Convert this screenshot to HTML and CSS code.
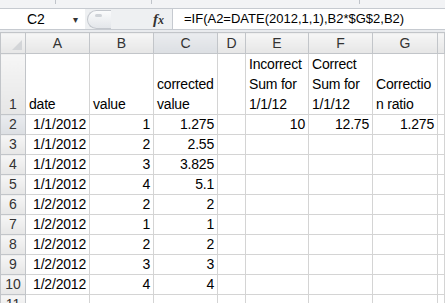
FILE: index.html
```html
<!DOCTYPE html>
<html lang="en">
<head>
    <meta charset="UTF-8">
    <title>Sheet</title>
    <link rel="stylesheet" href="styles.css">
</head>
<body>
    <div class="ribbon">
        <div class="rib rib-1"></div>
        <div class="rib rib-2"></div>
        <div class="rib rib-3"></div>
    </div>

    <div class="formula-bar">
        <div class="name-box">
            <span class="cell-ref">C2</span>
            <span class="drop">&#9662;</span>
        </div>
        <div class="splitter"><div class="knob"><span class="dimple"></span></div></div>
        <div class="fx"><i>f</i><i class="x">x</i></div>
        <div class="formula">=IF(A2=DATE(2012,1,1),B2*$G$2,B2)</div>
    </div>

    <table class="sheet">
        <colgroup>
            <col class="c-hdr"><col class="c-a"><col class="c-b"><col class="c-c"><col class="c-d"><col class="c-e"><col class="c-f"><col class="c-g"><col class="c-h">
        </colgroup>
        <tr class="col-heads">
            <th class="corner"><span class="tri"></span></th>
            <th>A</th><th>B</th><th class="sel">C</th><th>D</th><th>E</th><th>F</th><th>G</th><th></th>
        </tr>
        <tr class="tall">
            <th>1</th>
            <td>date</td><td>value</td><td>corrected<br>value</td><td></td>
            <td>Incorrect<br>Sum for<br>1/1/12</td>
            <td>Correct<br>Sum for<br>1/1/12</td>
            <td>Correctio<br>n ratio</td><td></td>
        </tr>
        <tr><th class="sel">2</th><td class="n">1/1/2012</td><td class="n">1</td><td class="n">1.275</td><td></td><td class="n">10</td><td class="n">12.75</td><td class="n">1.275</td><td></td></tr>
        <tr><th>3</th><td class="n">1/1/2012</td><td class="n">2</td><td class="n">2.55</td><td></td><td></td><td></td><td></td><td></td></tr>
        <tr><th>4</th><td class="n">1/1/2012</td><td class="n">3</td><td class="n">3.825</td><td></td><td></td><td></td><td></td><td></td></tr>
        <tr><th>5</th><td class="n">1/1/2012</td><td class="n">4</td><td class="n">5.1</td><td></td><td></td><td></td><td></td><td></td></tr>
        <tr><th>6</th><td class="n">1/2/2012</td><td class="n">2</td><td class="n">2</td><td></td><td></td><td></td><td></td><td></td></tr>
        <tr><th>7</th><td class="n">1/2/2012</td><td class="n">1</td><td class="n">1</td><td></td><td></td><td></td><td></td><td></td></tr>
        <tr><th>8</th><td class="n">1/2/2012</td><td class="n">2</td><td class="n">2</td><td></td><td></td><td></td><td></td><td></td></tr>
        <tr><th>9</th><td class="n">1/2/2012</td><td class="n">3</td><td class="n">3</td><td></td><td></td><td></td><td></td><td></td></tr>
        <tr><th>10</th><td class="n">1/2/2012</td><td class="n">4</td><td class="n">4</td><td></td><td></td><td></td><td></td><td></td></tr>
        <tr><th>11</th><td></td><td></td><td></td><td></td><td></td><td></td><td></td><td></td></tr>
    </table>
</body>
</html>
```

FILE: styles.css
```css
body {
    margin: 0;
    font-family: "Liberation Sans", Arial, sans-serif;
    font-size: 14px;
    color: #000;
    background-color: #e9ebee;
    overflow: hidden;
}

/* strip left over from the ribbon */
.ribbon {
    height: 8px;
    background-color: #f2f3f5;
    border-bottom: 1px solid #c6cad0;
    display: flex;
}

.rib {
    height: 4px;
    border-right: 1px solid #c0c4ca;
}

.rib-1 { width: 55px; }
.rib-2 { width: 95px; }
.rib-3 { width: 207px; }

/* name box + formula */
.formula-bar {
    display: flex;
    height: 20px;
    background-color: #eef0f2;
    border-bottom: 1px solid #c6cad0;
}

.name-box {
    width: 85px;
    background-color: #fff;
    display: flex;
    align-items: center;
    box-sizing: border-box;
}

.cell-ref {
    width: 56px;
    padding-left: 27px;
    box-sizing: border-box;
    font-size: 14px;
}

.drop {
    font-size: 10px;
    color: #333;
    margin-left: 17px;
}

.splitter {
    width: 66px;
    display: flex;
    align-items: center;
    padding-left: 2px;
}

.knob {
    position: relative;
    width: 24px;
    height: 19px;
    border: 1px solid #c3c7cd;
    border-right: none;
    border-radius: 10px 0 0 10px;
    background: linear-gradient(#fafbfc, #e3e6ea);
    box-sizing: border-box;
}

.dimple {
    position: absolute;
    left: 7px;
    top: 3px;
    width: 7px;
    height: 3px;
    border-radius: 3px;
    background-color: #cfd3d8;
}

.fx {
    width: 19px;
    display: flex;
    align-items: center;
    font-family: "Liberation Serif", "Times New Roman", serif;
    font-size: 15px;
    font-weight: bold;
    color: #333;
}

.fx .x {
    font-size: 12px;
    margin-top: 3px;
}

.formula {
    flex: 1;
    background-color: #fff;
    border-left: 1px solid #c6cad0;
    padding-left: 11px;
    line-height: 20px;
    font-size: 13px;
    white-space: nowrap;
}

/* the grid */
.sheet {
    margin-top: 2px;
    border-collapse: collapse;
    table-layout: fixed;
    width: 445px;
    background-color: #fff;
}

.c-hdr { width: 25px; }
.c-a { width: 64px; }
.c-b { width: 64px; }
.c-c { width: 64px; }
.c-d { width: 28px; }
.c-e { width: 63px; }
.c-f { width: 64px; }
.c-g { width: 65px; }

.sheet th,
.sheet td {
    border: 1px solid #d4d4d4;
    padding: 0 3px;
    height: 19px;
    line-height: 19px;
    white-space: nowrap;
    overflow: hidden;
    vertical-align: bottom;
}

.sheet td {
    text-align: left;
    letter-spacing: -0.2px;
}

.sheet th {
    font-weight: normal;
    color: #333;
    background: linear-gradient(#f6f6f6, #e6e6e6);
    border-color: #c2c5c9;
    text-align: center;
    padding: 0;
}

.col-heads th {
    height: 20px;
    vertical-align: middle;
}

.sheet th.sel {
    background: linear-gradient(#eaecef, #dcdfe3);
}

.tall td,
.tall th {
    height: 58px;
    line-height: 20px;
}

.n {
    text-align: right !important;
}

.corner {
    position: relative;
}

.tri {
    position: absolute;
    right: 3px;
    bottom: 3px;
    width: 0;
    height: 0;
    border-left: 10px solid transparent;
    border-bottom: 10px solid #d3d5d8;
}
```
